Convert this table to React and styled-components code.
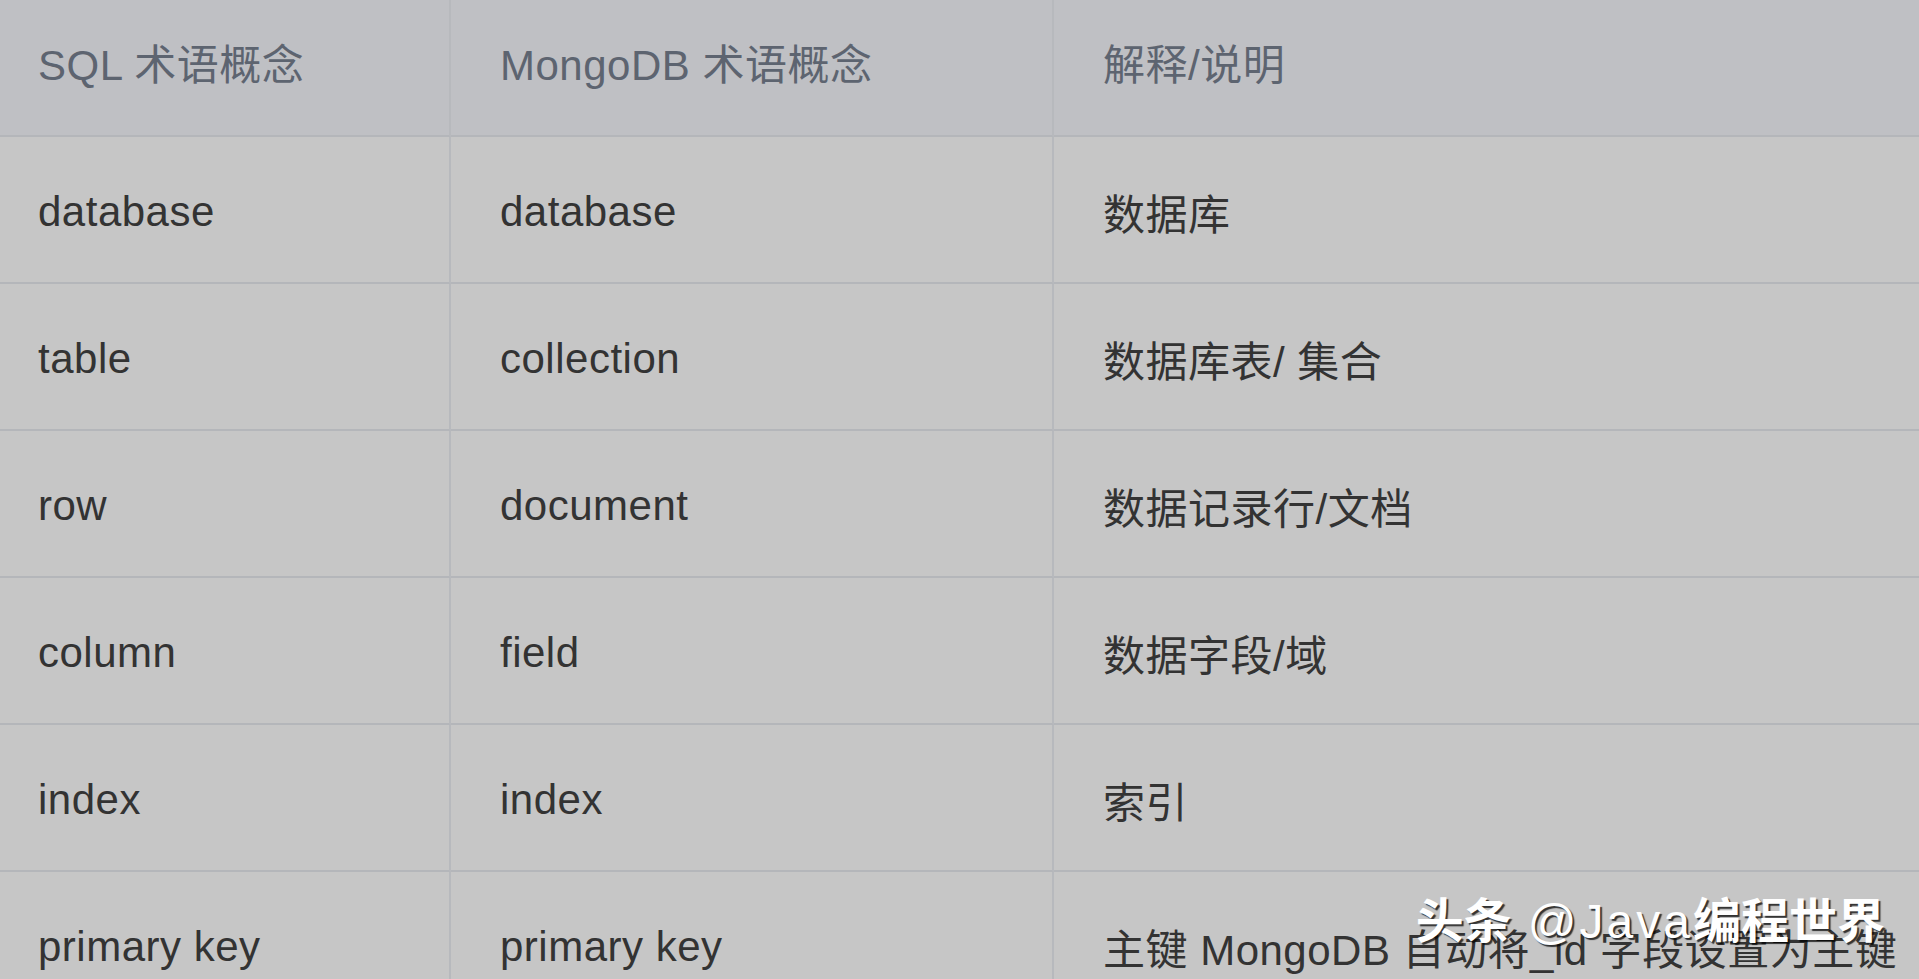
import React from 'react'
import styled, { createGlobalStyle } from 'styled-components'

const GlobalStyle = createGlobalStyle`
  html, body {
    margin: 0;
    padding: 0;
    background: #c6c6c6;
    overflow: hidden;
  }
`

const Page = styled.div`
  position: relative;
  width: 1919px;
  height: 979px;
  overflow: hidden;
  background: #c6c6c6;
  font-family: "Liberation Sans", "Noto Sans CJK SC", sans-serif;
`

const Table = styled.div`
  display: grid;
  grid-template-columns: 451px 603px 1fr;
  grid-auto-rows: 147px;
  grid-template-rows: 137px;
`

const Cell = styled.div`
  display: flex;
  align-items: center;
  padding-left: ${p => (p.first ? '38px' : '49px')};
  padding-top: ${p => (p.head ? '0' : '4px')};
  padding-bottom: ${p => (p.head ? '12px' : '0')};
  background: ${p => (p.head ? '#bfc0c4' : '#c6c6c6')};
  color: ${p => (p.head ? '#5d6470' : '#333333')};
  font-size: 42px;
  letter-spacing: 0.5px;
  white-space: nowrap;
  border-bottom: 2px solid #b4b6ba;
  border-right: ${p => (p.last ? 'none' : '2px solid #b7b9bd')};
  box-sizing: border-box;
`

const Watermark = styled.div`
  position: absolute;
  right: 34px;
  bottom: 33px;
  font-family: "Liberation Sans", "Noto Sans CJK SC", sans-serif;
  font-size: 48px;
  font-weight: 700;
  line-height: 1;
  color: #ffffff;
  white-space: nowrap;
  text-shadow: 2px 2px 1px rgba(0, 0, 0, 0.75);

  span {
    margin-left: 16px;
    font-weight: 400;
    letter-spacing: 3px;
  }
`

const header = ['SQL 术语概念', 'MongoDB 术语概念', '解释/说明']

const rows = [
  ['database', 'database', '数据库'],
  ['table', 'collection', '数据库表/ 集合'],
  ['row', 'document', '数据记录行/文档'],
  ['column', 'field', '数据字段/域'],
  ['index', 'index', '索引'],
  ['primary key', 'primary key', '主键 MongoDB 自动将_id 字段设置为主键']
]

const App = () => {
  return (
    <Page>
      <GlobalStyle />
      <Table>
        {header.map((h, i) => (
          <Cell key={'h' + i} head first={i === 0} last={i === 2}>
            {h}
          </Cell>
        ))}
        {rows.map((r, ri) =>
          r.map((c, ci) => (
            <Cell key={ri + '-' + ci} first={ci === 0} last={ci === 2}>
              {c}
            </Cell>
          ))
        )}
      </Table>
      <Watermark>
        头条<span>@Java</span>编程世界
      </Watermark>
    </Page>
  )
}

export default App
